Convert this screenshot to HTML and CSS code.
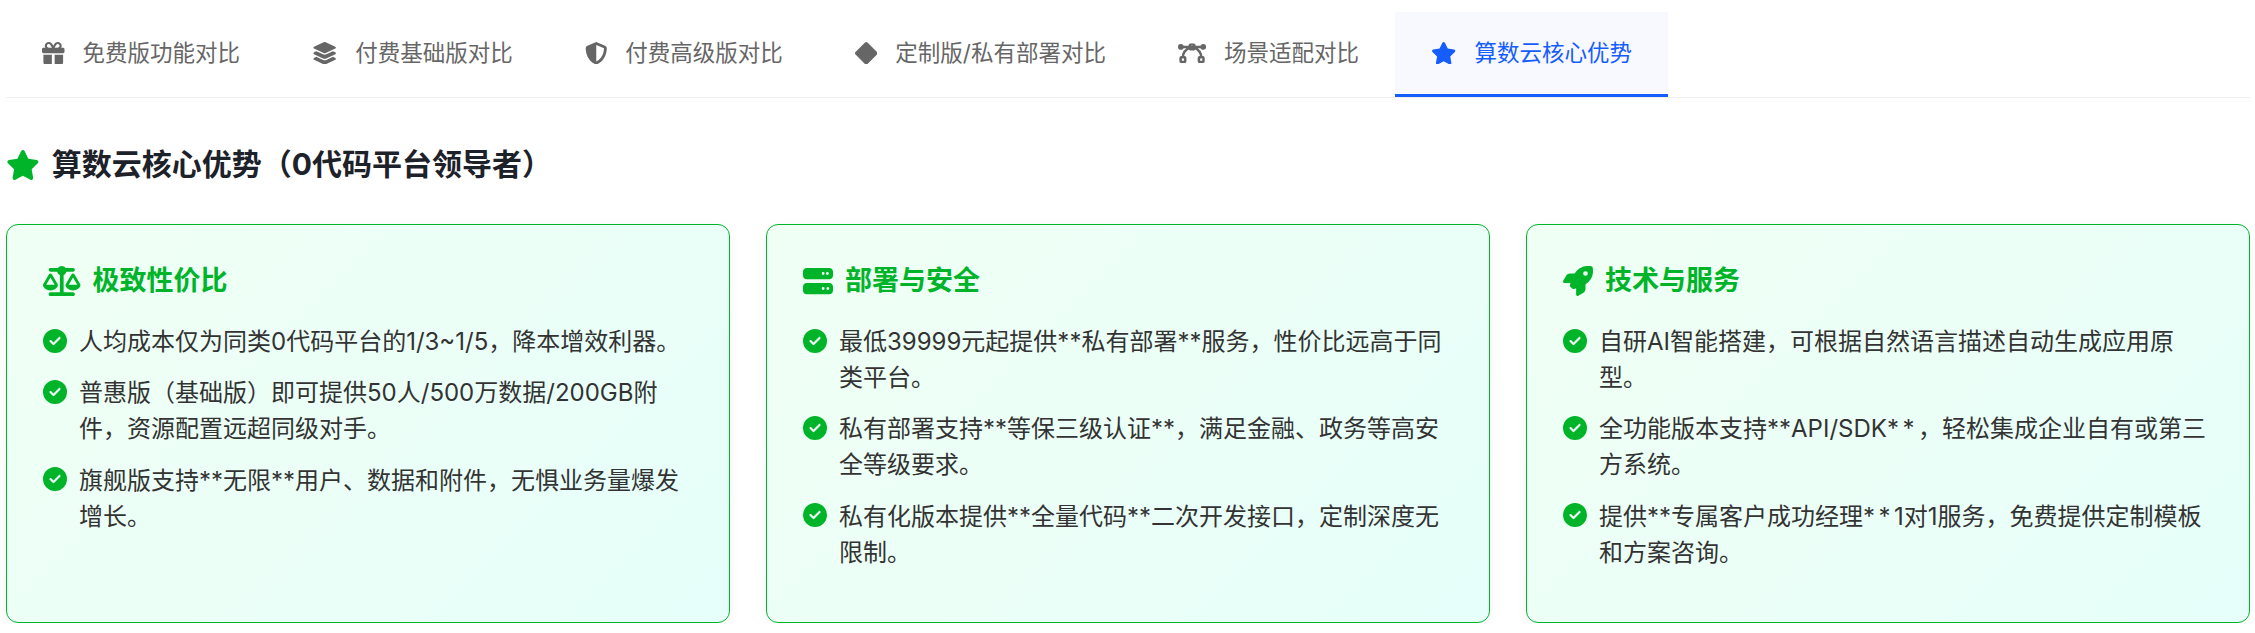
FILE: index.html
```html
<!DOCTYPE html>
<html lang="zh-CN">
<head>
<meta charset="utf-8">
<title>算数云核心优势</title>
<link rel="stylesheet" href="styles.css">
</head>
<body>
<div class="page">
  <nav class="tabs">
    <a class="tab"><svg class="tab-icon" viewBox="0 0 512 512"><path d="M190.5 68.8L225.3 128H224 152c-22.1 0-40-17.9-40-40s17.9-40 40-40h2.2c14.9 0 28.8 7.9 36.3 20.8zM64 88c0 14.4 3.5 28 9.6 40H32c-17.7 0-32 14.3-32 32v64c0 17.7 14.3 32 32 32H480c17.7 0 32-14.3 32-32V160c0-17.7-14.3-32-32-32H438.4c6.1-12 9.6-25.6 9.6-40c0-48.6-39.4-88-88-88h-2.2c-31.9 0-61.5 16.9-77.7 44.4L256 85.5l-24.1-41C215.7 16.9 186.1 0 154.2 0H152C103.4 0 64 39.4 64 88zm336 0c0 22.1-17.9 40-40 40H288h-1.3l34.8-59.2C329.1 55.9 342.9 48 357.8 48H360c22.1 0 40 17.9 40 40zM32 288V464c0 26.5 21.5 48 48 48H224V288H32zM288 512H432c26.5 0 48-21.5 48-48V288H288V512z"/></svg><span>免费版功能对比</span></a>
    <a class="tab"><svg class="tab-icon" viewBox="0 0 576 512"><path d="M264.5 5.2c14.9-6.9 32.1-6.9 47 0l218.6 101c8.5 3.9 13.9 12.4 13.9 21.8s-5.4 17.9-13.9 21.8l-218.6 101c-14.9 6.9-32.1 6.9-47 0L45.9 149.8C37.4 145.8 32 137.3 32 128s5.4-17.9 13.9-21.8L264.5 5.2zM476.9 209.6l53.2 24.6c8.5 3.9 13.9 12.4 13.9 21.8s-5.4 17.9-13.9 21.8l-218.6 101c-14.9 6.9-32.1 6.9-47 0L45.9 277.8C37.4 273.8 32 265.3 32 256s5.4-17.9 13.9-21.8l53.2-24.6 152 70.2c23.4 10.8 50.4 10.8 73.8 0l152-70.2zm-152 198.2l152-70.2 53.2 24.6c8.5 3.9 13.9 12.4 13.9 21.8s-5.4 17.9-13.9 21.8l-218.6 101c-14.9 6.9-32.1 6.9-47 0L45.9 405.8C37.4 401.8 32 393.3 32 384s5.4-17.9 13.9-21.8l53.2-24.6 152 70.2c23.4 10.8 50.4 10.8 73.8 0z"/></svg><span>付费基础版对比</span></a>
    <a class="tab"><svg class="tab-icon" viewBox="0 0 512 512"><path d="M256 0c4.6 0 9.2 1 13.4 2.9L457.7 82.8c22 9.3 38.4 31 38.3 57.2c-.5 99.2-41.3 280.7-213.6 363.2c-16.7 8-36.1 8-52.8 0C57.3 420.7 16.5 239.2 16 140c-.1-26.2 16.3-47.9 38.3-57.2L242.7 2.9C246.8 1 251.4 0 256 0zm0 66.8V444.8C394 378 431.1 230.1 432 141.4L256 66.8l0 0z"/></svg><span>付费高级版对比</span></a>
    <a class="tab"><svg class="tab-icon" viewBox="0 0 512 512"><path d="M284.3 11.7c-15.6-15.6-40.9-15.6-56.6 0l-216 216c-15.6 15.6-15.6 40.9 0 56.6l216 216c15.6 15.6 40.9 15.6 56.6 0l216-216c15.6-15.6 15.6-40.9 0-56.6l-216-216z"/></svg><span>定制版/私有部署对比</span></a>
    <a class="tab"><svg class="tab-icon" viewBox="0 0 640 512"><circle cx="64" cy="112" r="64"/><circle cx="576" cy="112" r="64"/><path class="bez" d="M64 112H576M272 128C170 170 112 250 112 350M368 128C470 170 528 250 528 350"/><rect class="bez" x="268" y="60" width="104" height="104" rx="16"/><rect class="bez" x="60" y="348" width="104" height="104" rx="16"/><rect class="bez" x="476" y="348" width="104" height="104" rx="16"/></svg><span>场景适配对比</span></a>
    <a class="tab is-active"><svg class="tab-icon" viewBox="0 0 576 512"><path d="M316.9 18C311.6 7 300.4 0 288.1 0s-23.4 7-28.8 18L195 150.3 51.4 171.5c-12 1.8-22 10.2-25.7 21.7s-.7 24.2 7.9 32.7L137.8 329 113.2 474.7c-2 12 3 24.2 12.9 31.3s23 8 33.8 2.3l128.3-68.5 128.3 68.5c10.8 5.7 23.9 4.9 33.8-2.3s14.9-19.3 12.9-31.3L438.5 329 542.7 225.9c8.6-8.5 11.7-21.2 7.9-32.7s-13.7-19.9-25.7-21.7L381.2 150.3 316.9 18z"/></svg><span>算数云核心优势</span></a>
  </nav>

  <h1 class="section-title"><svg class="section-icon" viewBox="0 0 576 512"><path d="M316.9 18C311.6 7 300.4 0 288.1 0s-23.4 7-28.8 18L195 150.3 51.4 171.5c-12 1.8-22 10.2-25.7 21.7s-.7 24.2 7.9 32.7L137.8 329 113.2 474.7c-2 12 3 24.2 12.9 31.3s23 8 33.8 2.3l128.3-68.5 128.3 68.5c10.8 5.7 23.9 4.9 33.8-2.3s14.9-19.3 12.9-31.3L438.5 329 542.7 225.9c8.6-8.5 11.7-21.2 7.9-32.7s-13.7-19.9-25.7-21.7L381.2 150.3 316.9 18z"/></svg><span>算数云核心优势（0代码平台领导者）</span></h1>

  <div class="cards">
    <section class="card">
      <h2 class="card-title"><svg class="card-icon" viewBox="0 0 640 512"><path d="M384 32H512c17.7 0 32 14.3 32 32s-14.3 32-32 32H398.4c-5.2 25.8-22.9 47.1-46.4 57.3V448H512c17.7 0 32 14.3 32 32s-14.3 32-32 32H320 128c-17.7 0-32-14.3-32-32s14.3-32 32-32H288V153.3c-23.5-10.3-41.2-31.6-46.4-57.3H128c-17.7 0-32-14.3-32-32s14.3-32 32-32H256c14.6-19.4 37.8-32 64-32s49.4 12.6 64 32zm55.6 288H584.4L512 195.8 439.6 320zM512 416c-62.9 0-115.2-34-126-78.9c-2.6-11 1-22.3 6.7-32.1l95.2-163.2c5-8.6 14.2-13.8 24.1-13.8s19.1 5.3 24.1 13.8l95.2 163.2c5.7 9.8 9.3 21.1 6.7 32.1C627.2 382 574.9 416 512 416zM126.8 195.8L54.4 320H199.3L126.8 195.8zM.9 337.1c-2.6-11 1-22.3 6.7-32.1l95.2-163.2c5-8.6 14.2-13.8 24.1-13.8s19.1 5.3 24.1 13.8l95.2 163.2c5.7 9.8 9.3 21.1 6.7 32.1C242 382 189.7 416 126.8 416S11.7 382 .9 337.1z"/></svg><span>极致性价比</span></h2>
      <ul class="points">
        <li class="point"><svg class="check" viewBox="0 0 512 512"><path d="M256 512A256 256 0 1 0 256 0a256 256 0 1 0 0 512zM369 209L241 337c-9.4 9.4-24.6 9.4-33.9 0l-64-64c-9.4-9.4-9.4-24.6 0-33.9s24.6-9.4 33.9 0l47 47L335 175c9.4-9.4 24.6-9.4 33.9 0s9.4 24.6 0 33.9z"/></svg><span>人均成本仅为同类0代码平台的1/3~1/5，降本增效利器。</span></li>
        <li class="point"><svg class="check" viewBox="0 0 512 512"><path d="M256 512A256 256 0 1 0 256 0a256 256 0 1 0 0 512zM369 209L241 337c-9.4 9.4-24.6 9.4-33.9 0l-64-64c-9.4-9.4-9.4-24.6 0-33.9s24.6-9.4 33.9 0l47 47L335 175c9.4-9.4 24.6-9.4 33.9 0s9.4 24.6 0 33.9z"/></svg><span>普惠版（基础版）即可提供50人/500万数据/200GB附件，资源配置远超同级对手。</span></li>
        <li class="point"><svg class="check" viewBox="0 0 512 512"><path d="M256 512A256 256 0 1 0 256 0a256 256 0 1 0 0 512zM369 209L241 337c-9.4 9.4-24.6 9.4-33.9 0l-64-64c-9.4-9.4-9.4-24.6 0-33.9s24.6-9.4 33.9 0l47 47L335 175c9.4-9.4 24.6-9.4 33.9 0s9.4 24.6 0 33.9z"/></svg><span>旗舰版支持**无限**用户、数据和附件，无惧业务量爆发增长。</span></li>
      </ul>
    </section>
    <section class="card">
      <h2 class="card-title"><svg class="card-icon" viewBox="0 0 512 512"><path d="M64 32C28.7 32 0 60.7 0 96v64c0 35.3 28.7 64 64 64H448c35.3 0 64-28.7 64-64V96c0-35.3-28.7-64-64-64H64zm280 72a24 24 0 1 1 0 48 24 24 0 1 1 0-48zm48 24a24 24 0 1 1 48 0 24 24 0 1 1 -48 0zM64 288c-35.3 0-64 28.7-64 64v64c0 35.3 28.7 64 64 64H448c35.3 0 64-28.7 64-64V352c0-35.3-28.7-64-64-64H64zm280 72a24 24 0 1 1 0 48 24 24 0 1 1 0-48zm56 24a24 24 0 1 1 48 0 24 24 0 1 1 -48 0z"/></svg><span>部署与安全</span></h2>
      <ul class="points">
        <li class="point"><svg class="check" viewBox="0 0 512 512"><path d="M256 512A256 256 0 1 0 256 0a256 256 0 1 0 0 512zM369 209L241 337c-9.4 9.4-24.6 9.4-33.9 0l-64-64c-9.4-9.4-9.4-24.6 0-33.9s24.6-9.4 33.9 0l47 47L335 175c9.4-9.4 24.6-9.4 33.9 0s9.4 24.6 0 33.9z"/></svg><span>最低39999元起提供**私有部署**服务，性价比远高于同类平台。</span></li>
        <li class="point"><svg class="check" viewBox="0 0 512 512"><path d="M256 512A256 256 0 1 0 256 0a256 256 0 1 0 0 512zM369 209L241 337c-9.4 9.4-24.6 9.4-33.9 0l-64-64c-9.4-9.4-9.4-24.6 0-33.9s24.6-9.4 33.9 0l47 47L335 175c9.4-9.4 24.6-9.4 33.9 0s9.4 24.6 0 33.9z"/></svg><span>私有部署支持**等保三级认证**，满足金融、政务等高安全等级要求。</span></li>
        <li class="point"><svg class="check" viewBox="0 0 512 512"><path d="M256 512A256 256 0 1 0 256 0a256 256 0 1 0 0 512zM369 209L241 337c-9.4 9.4-24.6 9.4-33.9 0l-64-64c-9.4-9.4-9.4-24.6 0-33.9s24.6-9.4 33.9 0l47 47L335 175c9.4-9.4 24.6-9.4 33.9 0s9.4 24.6 0 33.9z"/></svg><span>私有化版本提供**全量代码**二次开发接口，定制深度无限制。</span></li>
      </ul>
    </section>
    <section class="card">
      <h2 class="card-title"><svg class="card-icon" viewBox="0 0 512 512"><path d="M156.6 384.9L125.7 354c-8.5-8.5-11.5-20.8-7.7-32.2c3-8.9 7-20.5 11.8-33.8L24 288c-8.6 0-16.6-4.6-20.9-12.1s-4.2-16.7 .2-24.1l52.5-88.5c13-21.9 36.5-35.3 61.9-35.3l82.3 0c2.4-4 4.8-7.7 7.2-11.3C289.1-4.1 411.1-8.1 483.9 5.3c11.6 2.1 20.6 11.2 22.8 22.8c13.4 72.9 9.3 194.8-111.4 276.7c-3.5 2.4-7.3 4.8-11.3 7.2v82.3c0 25.4-13.4 49-35.3 61.9l-88.5 52.5c-7.4 4.4-16.6 4.5-24.1 .2s-12.1-12.2-12.1-20.9V380.8c-14.1 4.9-26.4 8.9-35.7 11.9c-11.2 3.6-23.4 .5-31.8-7.8zM384 168a40 40 0 1 0 0-80 40 40 0 1 0 0 80z"/></svg><span>技术与服务</span></h2>
      <ul class="points">
        <li class="point"><svg class="check" viewBox="0 0 512 512"><path d="M256 512A256 256 0 1 0 256 0a256 256 0 1 0 0 512zM369 209L241 337c-9.4 9.4-24.6 9.4-33.9 0l-64-64c-9.4-9.4-9.4-24.6 0-33.9s24.6-9.4 33.9 0l47 47L335 175c9.4-9.4 24.6-9.4 33.9 0s9.4 24.6 0 33.9z"/></svg><span>自研AI智能搭建，可根据自然语言描述自动生成应用原型。</span></li>
        <li class="point"><svg class="check" viewBox="0 0 512 512"><path d="M256 512A256 256 0 1 0 256 0a256 256 0 1 0 0 512zM369 209L241 337c-9.4 9.4-24.6 9.4-33.9 0l-64-64c-9.4-9.4-9.4-24.6 0-33.9s24.6-9.4 33.9 0l47 47L335 175c9.4-9.4 24.6-9.4 33.9 0s9.4 24.6 0 33.9z"/></svg><span>全功能版本支持**API/SDK<span class="wide">**</span>，轻松集成企业自有或第三方系统。</span></li>
        <li class="point"><svg class="check" viewBox="0 0 512 512"><path d="M256 512A256 256 0 1 0 256 0a256 256 0 1 0 0 512zM369 209L241 337c-9.4 9.4-24.6 9.4-33.9 0l-64-64c-9.4-9.4-9.4-24.6 0-33.9s24.6-9.4 33.9 0l47 47L335 175c9.4-9.4 24.6-9.4 33.9 0s9.4 24.6 0 33.9z"/></svg><span>提供**专属客户成功经理<span class="wide">**</span>1对1服务，免费提供定制模板和方案咨询。</span></li>
      </ul>
    </section>
  </div>
</div>
</body>
</html>
```
FILE: styles.css
```css
* { box-sizing: border-box; }
html, body { margin: 0; background: #fff; }
body {
  font-family: Inter, "Noto Sans CJK SC", sans-serif;
  color: #333;
  overflow: hidden;
}
.page { padding: 12px 5px 0 6px; }

.tabs {
  display: flex;
  border-bottom: 1px solid #f0f0f0;
}
.tab {
  display: flex;
  align-items: center;
  gap: 18px;
  padding: 24px 36px;
  border-bottom: 3px solid transparent;
  font-size: 22.5px;
  line-height: 34px;
  color: #666;
  white-space: nowrap;
}
.tab-icon { height: 22.5px; flex: none; fill: currentColor; }
.bez { fill: none; stroke: currentColor; stroke-width: 56; }
.is-active {
  background: #f8f9ff;
  border-bottom-color: #165dff;
  color: #165dff;
}

.section-title {
  display: flex;
  align-items: center;
  gap: 12px;
  margin: 44px 0 37px;
  font-size: 30px;
  line-height: 45px;
  font-weight: 700;
  color: #1d2129;
}
.section-icon { height: 30px; flex: none; fill: #00b42a; }

.cards {
  display: grid;
  grid-template-columns: repeat(3, minmax(0, 1fr));
  gap: 36px;
}
.card {
  padding: 36px;
  border: 1px solid #00b42a;
  border-radius: 12px;
  background: linear-gradient(135deg, #f0fff4, #e6fffa);
  box-shadow: 0 3px 12px rgba(0, 0, 0, 0.05);
}
.card-title {
  display: flex;
  align-items: center;
  gap: 12px;
  margin: 0 0 22.5px;
  font-size: 27px;
  line-height: 40.5px;
  font-weight: 700;
  color: #00b42a;
}
.card-icon { height: 30px; flex: none; fill: currentColor; }

.points { list-style: none; margin: 0; padding: 0; }
.point {
  display: flex;
  align-items: flex-start;
  gap: 12px;
  margin-bottom: 15.4px;
  font-size: 24px;
  line-height: 36px;
}
.check { width: 24px; height: 24px; flex: none; margin-top: 4.5px; fill: #00b42a; }
.wide { letter-spacing: 3.5px; }
```
